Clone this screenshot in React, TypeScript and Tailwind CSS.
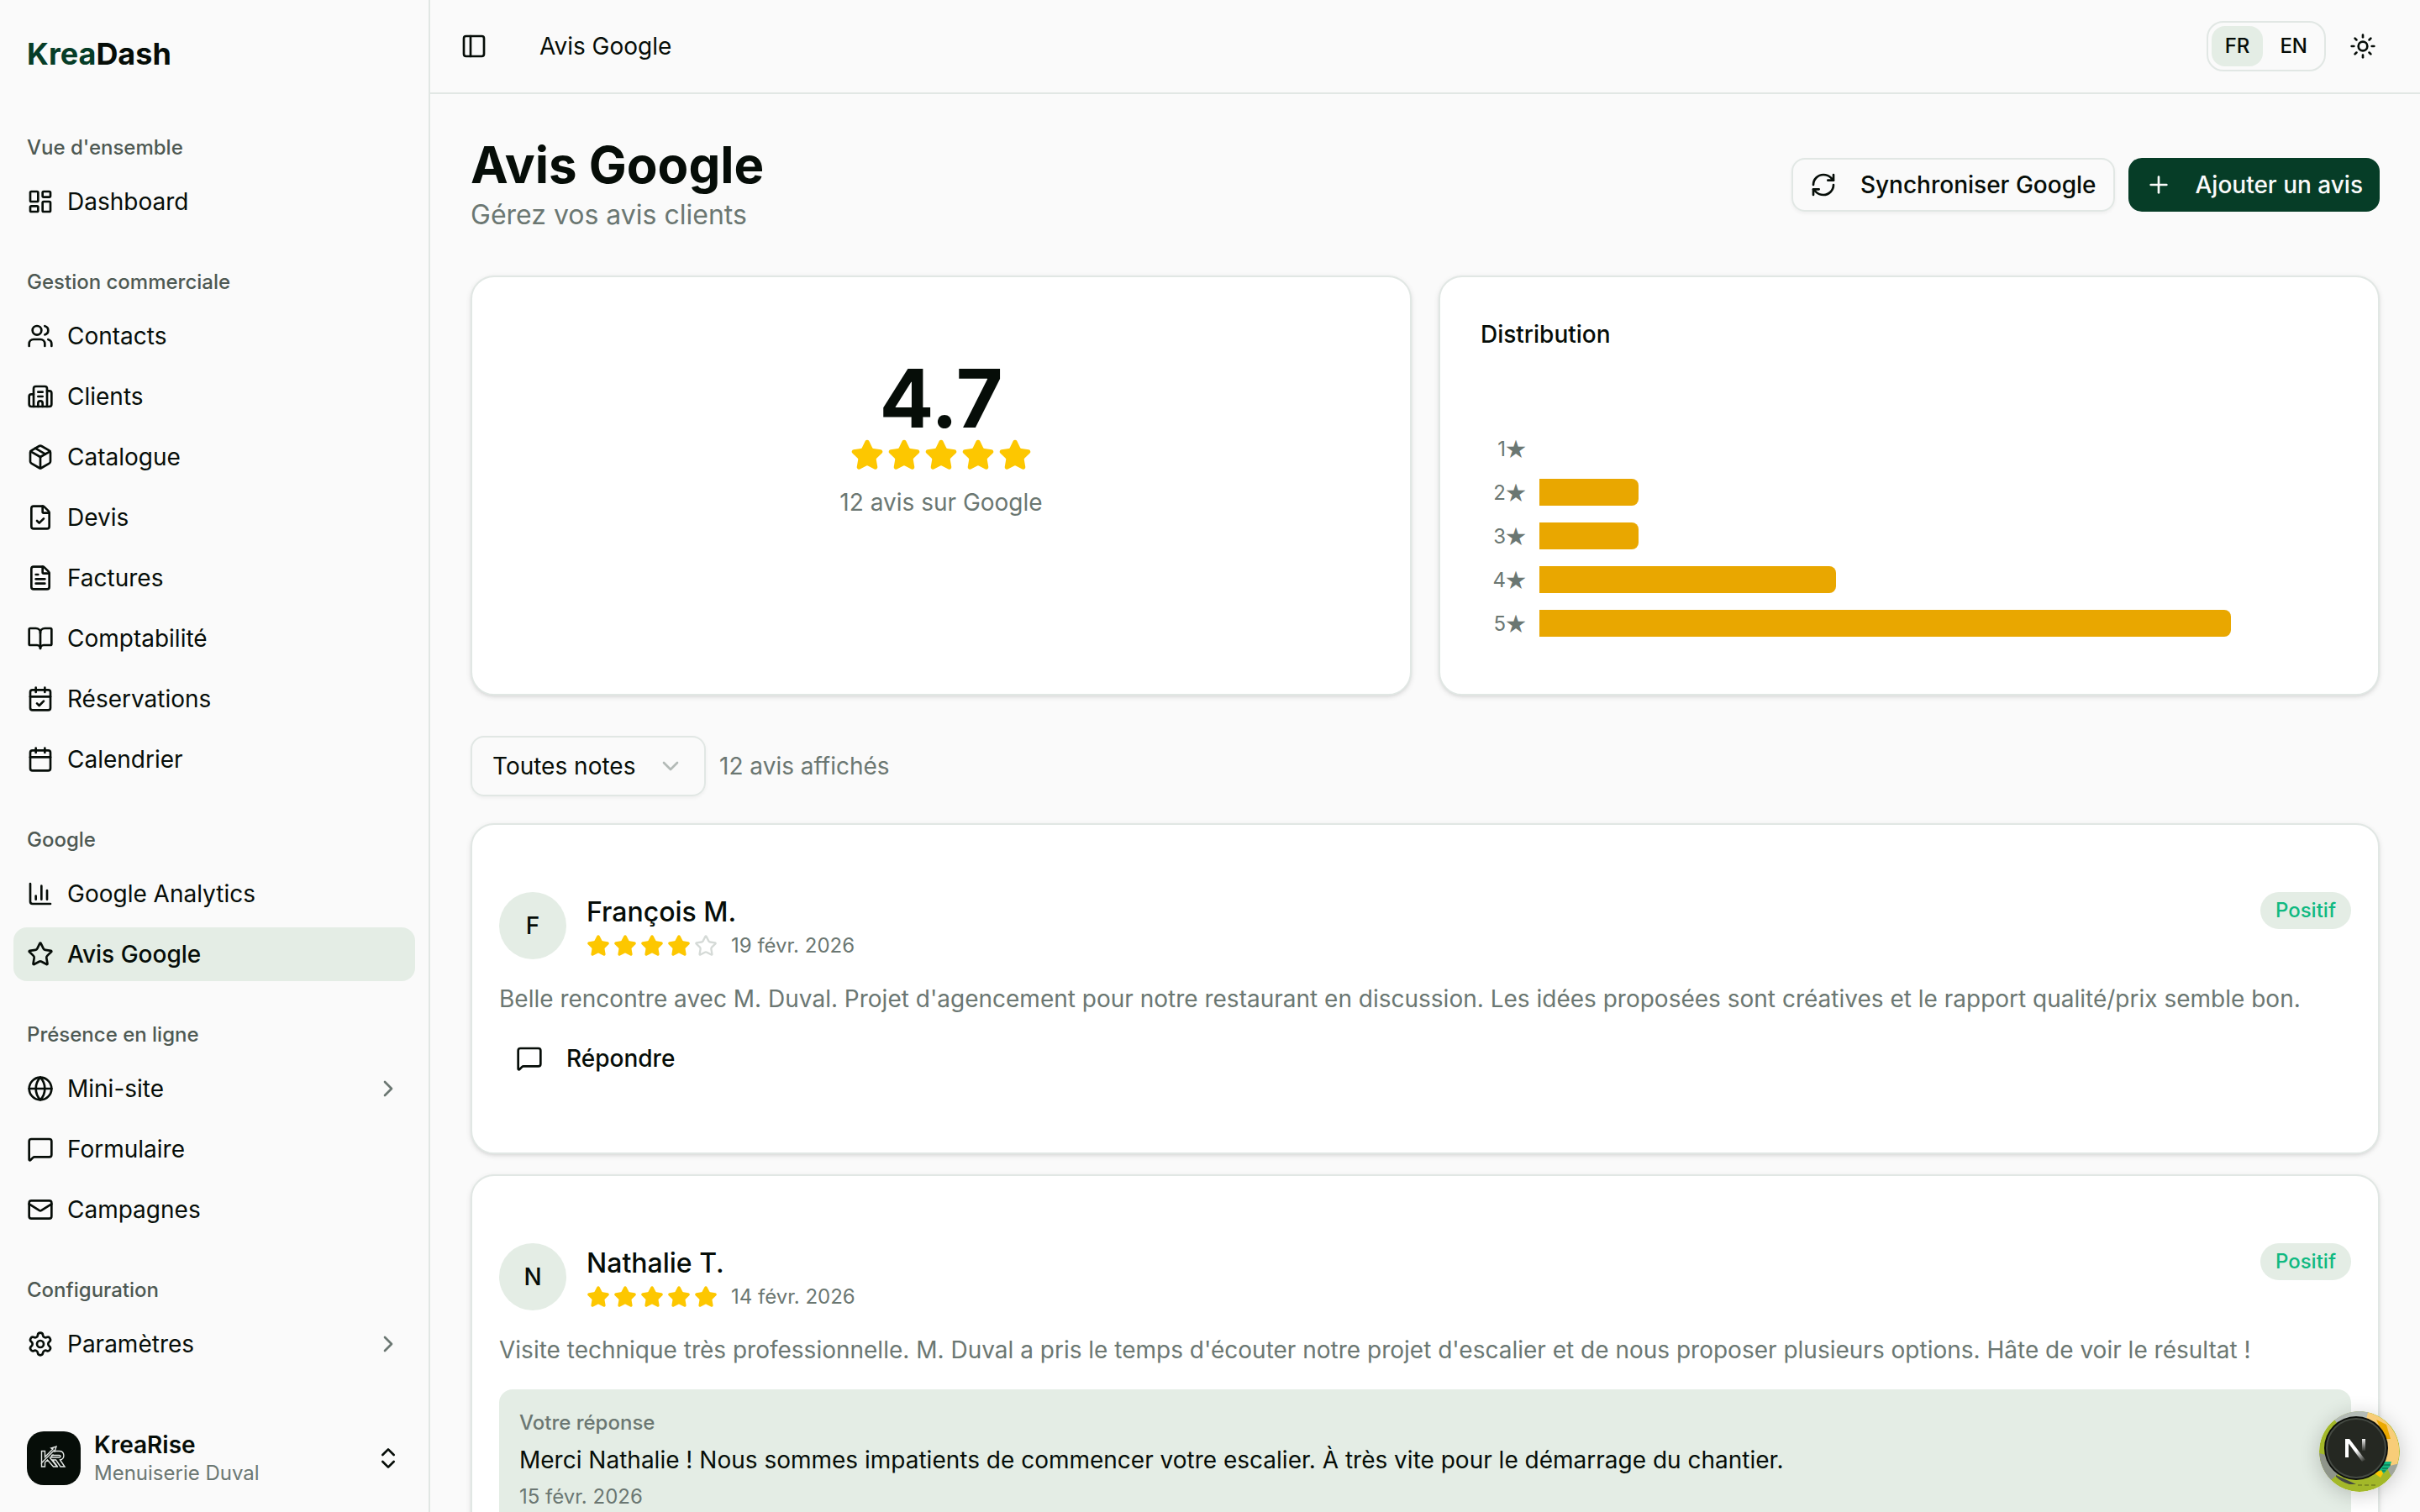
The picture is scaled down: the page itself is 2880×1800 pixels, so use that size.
import { useState } from 'react';
import type { LucideIcon } from 'lucide-react';
import {
    BookOpen,
    Building2,
    Calendar,
    CalendarCheck,
    ChartColumn,
    ChevronDown,
    ChevronRight,
    ChevronsUpDown,
    FileCheck,
    FileText,
    Globe,
    LayoutDashboard,
    Mail,
    MessageSquare,
    Package,
    PanelLeft,
    Plus,
    RefreshCw,
    Settings,
    Star,
    Sun,
    Users,
} from 'lucide-react';

type NavItem = { label: string; icon: LucideIcon; active?: boolean; expandable?: boolean };

const groups: { title: string; items: NavItem[] }[] = [
    {
        title: "Vue d'ensemble",
        items: [{ label: 'Dashboard', icon: LayoutDashboard }],
    },
    {
        title: 'Gestion commerciale',
        items: [
            { label: 'Contacts', icon: Users },
            { label: 'Clients', icon: Building2 },
            { label: 'Catalogue', icon: Package },
            { label: 'Devis', icon: FileCheck },
            { label: 'Factures', icon: FileText },
            { label: 'Comptabilité', icon: BookOpen },
            { label: 'Réservations', icon: CalendarCheck },
            { label: 'Calendrier', icon: Calendar },
        ],
    },
    {
        title: 'Google',
        items: [
            { label: 'Google Analytics', icon: ChartColumn },
            { label: 'Avis Google', icon: Star, active: true },
        ],
    },
    {
        title: 'Présence en ligne',
        items: [
            { label: 'Mini-site', icon: Globe, expandable: true },
            { label: 'Formulaire', icon: MessageSquare },
            { label: 'Campagnes', icon: Mail },
        ],
    },
    {
        title: 'Configuration',
        items: [{ label: 'Paramètres', icon: Settings, expandable: true }],
    },
];

const distribution = [
    { stars: 1, count: 0 },
    { stars: 2, count: 1 },
    { stars: 3, count: 1 },
    { stars: 4, count: 3 },
    { stars: 5, count: 7 },
];
const chartMax = 8;

const reviews = [
    {
        author: 'François M.',
        rating: 4,
        date: '19 févr. 2026',
        sentiment: 'Positif',
        comment:
            "Belle rencontre avec M. Duval. Projet d'agencement pour notre restaurant en discussion. Les idées proposées sont créatives et le rapport qualité/prix semble bon.",
        reply: null,
    },
    {
        author: 'Nathalie T.',
        rating: 5,
        date: '14 févr. 2026',
        sentiment: 'Positif',
        comment:
            "Visite technique très professionnelle. M. Duval a pris le temps d'écouter notre projet d'escalier et de nous proposer plusieurs options. Hâte de voir le résultat !",
        reply: {
            text: 'Merci Nathalie ! Nous sommes impatients de commencer votre escalier. À très vite pour le démarrage du chantier.',
            date: '15 févr. 2026',
        },
    },
];

function Stars({ rating, className }: { rating: number; className: string }) {
    return (
        <div className="flex gap-1">
            {[1, 2, 3, 4, 5].map((n) => (
                <Star
                    key={n}
                    className={`${className} ${n <= rating ? 'fill-yellow-400 text-yellow-400' : 'text-[#d5dad7]'}`}
                />
            ))}
        </div>
    );
}

function KrLogo() {
    return (
        <svg viewBox="0 0 64 64" className="size-16 shrink-0 rounded-[20px] bg-[#060d08]" fill="none" aria-hidden="true">
            <g stroke="#e4e8e6" strokeWidth="1.4" strokeLinejoin="miter">
                <path d="M17.5 23.5h4v7L31 21l-2-1 6-2-2 6-1-1-14.500 14.500z" />
                <path d="M17.500 37.500v4.500h4v-5l3-3 7 8h4.500l-8.500-10.500 4-4" />
                <path d="M31.500 23.500h7c7 0 7 10 1 10.500l5.500 8h-5l-5.500-8h-4l6 8" />
                <path d="M29 28.500h9.500c2 0 2 2.500 0 2.500h-10" />
            </g>
        </svg>
    );
}

function Sidebar() {
    return (
        <aside className="flex w-128 shrink-0 flex-col border-r-2 border-[#e1e7e4]">
            <div className="flex h-32 shrink-0 items-center px-8">
                <a href="#" className="text-[36px] leading-[40px] font-bold">
                    <span className="text-[#063d27]">Krea</span>Dash
                </a>
            </div>
            <nav className="flex-1 overflow-hidden">
                {groups.map((group) => (
                    <div key={group.title} className="p-4">
                        <h2 className="flex h-16 items-center px-4 text-[24px] font-medium text-[#4e5953]">
                            {group.title}
                        </h2>
                        <ul className="flex flex-col gap-2">
                            {group.items.map((item) => (
                                <li key={item.label}>
                                    <a
                                        href="#"
                                        className={`flex h-16 items-center gap-4 rounded-2xl px-4 text-[28px] ${item.active ? 'bg-[#e4ede5] font-medium' : ''}`}
                                    >
                                        <item.icon className="size-8" />
                                        <span>{item.label}</span>
                                        {item.expandable && <ChevronRight className="ml-auto size-8 text-[#6b7772]" />}
                                    </a>
                                </li>
                            ))}
                        </ul>
                    </div>
                ))}
            </nav>
            <div className="p-4">
                <button className="flex h-24 w-full items-center gap-4 px-4 text-left">
                    <KrLogo />
                    <span className="flex-1">
                        <span className="block text-[28px] leading-[36px] font-semibold">KreaRise</span>
                        <span className="block text-[24px] leading-[32px] text-[#6b7772]">Menuiserie Duval</span>
                    </span>
                    <ChevronsUpDown className="size-8" />
                </button>
            </div>
        </aside>
    );
}

function Header() {
    const [lang, setLang] = useState('FR');

    return (
        <header className="flex h-28 shrink-0 items-center border-b-2 border-[#e1e7e4] px-8">
            <button aria-label="Toggle sidebar" className="-ml-2 flex size-14 items-center justify-center">
                <PanelLeft className="size-8" />
            </button>
            <span className="ml-[50px] text-[28px]">Avis Google</span>
            <div className="ml-auto flex items-center gap-2">
                <div className="flex gap-1 rounded-[20px] border-2 border-[#e1e7e4] p-1">
                    {['FR', 'EN'].map((l) => (
                        <button
                            key={l}
                            onClick={() => setLang(l)}
                            className={`h-12 rounded-2xl px-4 text-[24px] font-medium ${l === lang ? 'bg-[#e4ede5]' : ''}`}
                        >
                            {l}
                        </button>
                    ))}
                </div>
                <button aria-label="Thème" className="flex size-18 items-center justify-center">
                    <Sun className="size-8" />
                </button>
            </div>
        </header>
    );
}

function ReviewCard({ review }: { review: (typeof reviews)[number] }) {
    return (
        <article className="rounded-[28px] border-2 border-[#e1e7e4] bg-white px-8 py-20 shadow-[0_2px_6px_rgba(0,0,0,0.1),0_2px_4px_-2px_rgba(0,0,0,0.1)]">
            <div className="flex items-start gap-6">
                <div className="flex size-20 items-center justify-center rounded-full bg-[#e4ede5] text-[28px] font-medium">
                    {review.author[0]}
                </div>
                <div className="flex-1">
                    <h3 className="text-[32px] leading-[48px] font-medium">{review.author}</h3>
                    <div className="flex items-center gap-4">
                        <Stars rating={review.rating} className="size-7" />
                        <span className="text-[24px] leading-[32px] text-[#6b7772]">{review.date}</span>
                    </div>
                </div>
                <span className="flex h-11 items-center rounded-full bg-[#e4ede5] px-[18px] text-[24px] font-medium text-[#10b981]">
                    {review.sentiment}
                </span>
            </div>
            <p className="mt-6 text-[28px] leading-[46px] text-[#6b7772]">{review.comment}</p>
            {review.reply ? (
                <div className="mt-6 rounded-2xl bg-[#e4ede5] p-6">
                    <p className="text-[24px] leading-[32px] font-medium text-[#6b7772]">Votre réponse</p>
                    <p className="mt-2 text-[28px] leading-[40px]">{review.reply.text}</p>
                    <p className="mt-2 text-[24px] leading-[32px] text-[#6b7772]">{review.reply.date}</p>
                </div>
            ) : (
                <button className="mt-4 flex h-16 items-center gap-7 px-5 text-[28px] font-medium">
                    <MessageSquare className="size-8" />
                    Répondre
                </button>
            )}
        </article>
    );
}

function DevBadge() {
    return (
        <button aria-label="Next.js" className="fixed right-6 bottom-6 size-24">
            <svg viewBox="0 0 96 96" className="size-24 rounded-full shadow-[0_4px_24px_rgba(0,0,0,0.2)]">
                <defs>
                    <linearGradient id="diag" x1="44" y1="47" x2="54" y2="60" gradientUnits="userSpaceOnUse">
                        <stop stopColor="#fff" />
                        <stop offset="1" stopColor="#fff" stopOpacity="0" />
                    </linearGradient>
                    <linearGradient id="stem" x1="53" y1="32" x2="53" y2="48" gradientUnits="userSpaceOnUse">
                        <stop stopColor="#fff" />
                        <stop offset="1" stopColor="#fff" stopOpacity="0" />
                    </linearGradient>
                </defs>
                <circle cx="48" cy="48" r="48" fill="#a3b829" />
                <path d="M56 1A48 48 0 0 1 91 68L48 48z" fill="#f8cd78" />
                <path d="M18 10A48 48 0 0 1 58 1L48 48z" fill="#b3bab5" />
                <path d="M0 50A48 48 0 0 0 14 82L40 60z" fill="#8f958a" />
                <path d="M96 62A48 48 0 0 1 86 78L80 66z" fill="#a0a59c" />
                <path d="M68 10l12 6 5 17h-6z" fill="#eba900" />
                <path d="M72 60h14l-2 6-7 8-6-3z" fill="#13b981" />
                <path d="M76 64h9M75 68h7M74 71h5" stroke="#0f5a42" />
                <path d="M66 74l8-4 2 4-3 5z" fill="#fdc700" />
                <path d="M20 76l24 11h-8q-10-3-16-9z" fill="#454a43" />
                <path d="M46 88h22" stroke="#5d6818" strokeDasharray="5 3" />
                <circle cx="44" cy="44" r="38" fill="#0b0d0a" />
                <circle cx="44" cy="44" r="35" fill="#252822" stroke="#454a43" strokeWidth="2" />
                <path d="M31 33h5l19 25-4 2z" fill="url(#diag)" />
                <path d="M31 33h4v22h-4z" fill="#fff" />
                <path d="M51 33h4v14h-4z" fill="url(#stem)" />
            </svg>
        </button>
    );
}

export default function App() {
    return (
        <div className="flex h-screen overflow-hidden bg-[#fafafa] font-['Inter','Noto_Sans_CJK_JP',sans-serif] text-[#060d08]">
            <Sidebar />
            <div className="flex min-w-0 flex-1 flex-col">
                <Header />
                <main className="flex-1 overflow-hidden p-12">
                    <div className="flex items-center justify-between">
                        <div>
                            <h1 className="text-[60px] leading-[72px] font-bold">Avis Google</h1>
                            <p className="text-[32px] leading-[48px] text-[#6b7772]">Gérez vos avis clients</p>
                        </div>
                        <div className="flex gap-4 text-[28px] font-medium">
                            <button className="flex h-16 items-center gap-7 rounded-2xl border-2 border-[#e1e7e4] px-5 shadow-[0_2px_4px_rgba(0,0,0,0.05)]">
                                <RefreshCw className="size-8" />
                                Synchroniser Google
                            </button>
                            <button className="flex h-16 items-center gap-7 rounded-2xl bg-[#063d27] px-5 text-[#fafafa]">
                                <Plus className="size-8" />
                                Ajouter un avis
                            </button>
                        </div>
                    </div>

                    <div className="mt-12 grid grid-cols-2 gap-8">
                        <section className="flex flex-col items-center rounded-[28px] border-2 border-[#e1e7e4] bg-white py-24 shadow-[0_2px_6px_rgba(0,0,0,0.1),0_2px_4px_-2px_rgba(0,0,0,0.1)]">
                            <div className="text-[96px] leading-[96px] font-bold">4.7</div>
                            <Stars rating={5} className="size-10" />
                            <p className="mt-4 text-[28px] leading-[40px] text-[#6b7772]">12 avis sur Google</p>
                        </section>
                        <section className="rounded-[28px] border-2 border-[#e1e7e4] bg-white px-12 pt-12 pb-[58px] shadow-[0_2px_6px_rgba(0,0,0,0.1),0_2px_4px_-2px_rgba(0,0,0,0.1)]">
                            <h2 className="text-[28px] leading-[40px] font-medium">Distribution</h2>
                            <div className="mt-[90px] pr-[10px]">
                                {distribution.map((row) => (
                                    <div key={row.stars} className="flex h-13 items-center gap-4">
                                        <span className="w-[54px] text-right text-[24px] leading-[32px] whitespace-nowrap text-[#6b7772]">
                                            {row.stars}
                                            <span className="font-['Noto_Sans_CJK_JP',sans-serif]">★</span>
                                        </span>
                                        <div className="flex-1">
                                            <div
                                                className="h-8 rounded-r-lg bg-[#e9a700]"
                                                style={{ width: `${(row.count / chartMax) * 100}%` }}
                                            />
                                        </div>
                                    </div>
                                ))}
                            </div>
                        </section>
                    </div>

                    <div className="mt-12 flex items-center gap-4 text-[28px]">
                        <div className="relative">
                            <select
                                aria-label="Filtrer par note"
                                className="h-18 w-70 appearance-none rounded-2xl border-2 border-[#e1e7e4] px-6 shadow-[0_2px_4px_rgba(0,0,0,0.05)]"
                            >
                                <option>Toutes notes</option>
                                <option>5 étoiles</option>
                                <option>4 étoiles</option>
                            </select>
                            <ChevronDown className="pointer-events-none absolute top-5 right-[26px] size-8 text-[#b3bab7]" />
                        </div>
                        <span className="text-[#6b7772]">12 avis affichés</span>
                    </div>

                    <div className="mt-8 flex flex-col gap-6">
                        {reviews.map((review) => (
                            <ReviewCard key={review.author} review={review} />
                        ))}
                    </div>
                </main>
            </div>
            <DevBadge />
        </div>
    );
}
